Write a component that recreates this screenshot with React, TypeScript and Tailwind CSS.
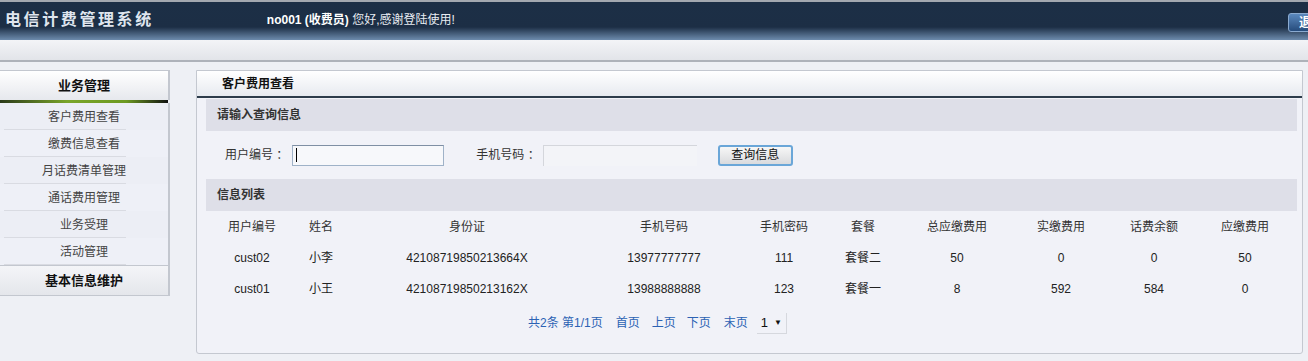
const menuItems = ["客户费用查看", "缴费信息查看", "月话费清单管理", "通话费用管理", "业务受理", "活动管理"];

const columns = [
  { title: "用户编号", width: "w-[92px]" },
  { title: "姓名", width: "w-[46px]" },
  { title: "身份证", width: "w-[246px]" },
  { title: "手机号码", width: "w-[148px]" },
  { title: "手机密码", width: "w-[92px]" },
  { title: "套餐", width: "w-[66px]" },
  { title: "总应缴费用", width: "w-[122px]" },
  { title: "实缴费用", width: "w-[86px]" },
  { title: "话费余额", width: "w-[100px]" },
  { title: "应缴费用", width: "w-[82px]" },
];

const rows = [
  ["cust02", "小李", "42108719850213664X", "13977777777", "111", "套餐二", "50", "0", "0", "50"],
  ["cust01", "小王", "42108719850213162X", "13988888888", "123", "套餐一", "8", "592", "584", "0"],
];

function Sidebar() {
  return (
    <div className="w-[170px] shrink-0">
      <div className="border-r-2 border-t border-[#c3c7cf] bg-[linear-gradient(to_bottom,#ffffff,#e6e8ed)] h-[30px] flex items-center justify-center text-[13px] font-bold text-[#111]">
        业务管理
      </div>
      <div className="h-[3px] bg-[linear-gradient(to_right,#2b3a1a,#7aa52a_40%,#6d9a22_75%,#111)] mr-[2px]" />
      <div className="border-r-2 border-[#c3c7cf] bg-[#eceef5]">
        {menuItems.map((item, i) => (
          <div
            key={item}
            className={`h-[27px] flex items-center justify-center text-[12px] text-[#444] ${i % 2 === 0 ? "" : "bg-[#eef0f7]"}`}
          >
            <div className="relative w-full h-full flex items-center justify-center">
              {item}
              <div className="absolute left-[4px] bottom-0 w-[122px] h-px bg-[#d9dbe2]" />
            </div>
          </div>
        ))}
      </div>
      <div className="border-r-2 border-y border-[#c3c7cf] bg-[linear-gradient(to_bottom,#f4f5f8,#e4e6eb)] h-[31px] flex items-center justify-center text-[13px] font-bold text-[#111]">
        基本信息维护
      </div>
    </div>
  );
}

function QueryForm() {
  return (
    <>
      <div className="h-[32px] bg-[#dedfe8] flex items-center pl-[11px] text-[12px] font-bold text-[#333]">
        请输入查询信息
      </div>
      <div className="h-[48px] flex items-center text-[12px] text-[#333]">
        <span className="ml-[19px] whitespace-pre">用户编号 ：</span>
        <div className="ml-[4px] w-[152px] h-[21px] border border-[#9fb2c8] border-t-[#7f8fa4] bg-[#f7f8fb] flex items-center">
          <div className="ml-[3px] w-px h-[14px] bg-[#000]" />
        </div>
        <span className="ml-[32px] whitespace-pre">手机号码 ：</span>
        <div className="ml-[3px] w-[154px] h-[21px] border-t border-l border-[#d4d6dc] bg-[#f3f4f8]" />
        <button className="ml-[21px] w-[75px] h-[21px] rounded-[3px] border-2 border-[#6aa6d8] bg-[linear-gradient(to_bottom,#f7f7f7,#d9dadd)] text-[12px] text-[#111] flex items-center justify-center">
          查询信息
        </button>
      </div>
    </>
  );
}

function InfoTable() {
  return (
    <>
      <div className="h-[32px] bg-[#dedfe8] flex items-center pl-[11px] text-[12px] font-bold text-[#333]">
        信息列表
      </div>
      <div className="flex h-[31px] items-center text-[12px] text-[#333]">
        {columns.map((c) => (
          <div key={c.title} className={`${c.width} text-center`}>
            {c.title}
          </div>
        ))}
      </div>
      {rows.map((r) => (
        <div key={r[0]} className="flex h-[31px] items-center text-[12px] text-[#222]">
          {r.map((v, i) => (
            <div key={i} className={`${columns[i].width} text-center`}>
              {v}
            </div>
          ))}
        </div>
      ))}
      <div className="h-[38px] flex items-center pl-[322px] text-[12px] text-[#2c62b4]">
        <span>共2条 第1/1页</span>
        <span className="ml-[13px]">首页</span>
        <span className="ml-[12px]">上页</span>
        <span className="ml-[11px]">下页</span>
        <span className="ml-[13px]">末页</span>
        <span className="ml-[9px] h-[21px] px-[4px] border-r border-b border-[#d6d8de] flex items-center gap-[6px] text-[#111] text-[13px]">
          1<span className="text-[8px]">▼</span>
        </span>
      </div>
    </>
  );
}

export default function App() {
  return (
    <div className="w-[1308px] h-[361px] overflow-hidden bg-[#eef0f5] font-['Liberation_Sans','Noto_Sans_CJK_SC',sans-serif]">
      {/* 顶部标题栏 */}
      <div className="h-[40px] bg-[linear-gradient(to_bottom,#a3a8b0_0px,#a3a8b0_2px,#1c2f46_2px,#1c2e45_27px,#6d8bad_40px)] flex items-start">
        <div className="ml-[5px] mt-[9px] text-[16px] font-bold tracking-[2.6px] text-[#dfe5ee] leading-[22px]">
          电信计费管理系统
        </div>
        <div className="ml-[113px] mt-[12px] text-[12px] leading-[16px] text-[#e8ecf2]">
          <span className="font-bold text-white">no001 (收费员)</span> 您好,感谢登陆使用!
        </div>
        <div className="ml-auto mr-[-22px] mt-[13px] w-[42px] h-[19px] rounded-[3px] border border-[#8aaad0] bg-[linear-gradient(to_bottom,#5b88bd,#264c7c)] text-white text-[12px] font-bold flex items-center pl-[10px]">
          退出
        </div>
      </div>
      <div className="h-[20px] bg-[linear-gradient(to_bottom,#f3f4f7,#e2e4e9)]" />
      <div className="h-[2px] bg-[#aeb2ba]" />

      <div className="flex pt-[8px]">
        <Sidebar />
        {/* 主面板 */}
        <div className="ml-[26px] w-[1107px] h-[284px] border border-[#c4c8d0] rounded-b-[3px] bg-[#f1f2f8]">
          <div className="h-[25px] bg-[linear-gradient(to_bottom,#ffffff,#e7eaf0)] flex items-center pl-[25px] text-[12px] font-bold text-[#111]">
            客户费用查看
          </div>
          <div className="h-[2px] bg-[#2d3c4b]" />
          <div className="ml-[9px] mr-[5px] mt-[1px]">
            <QueryForm />
            <InfoTable />
          </div>
        </div>
      </div>
    </div>
  );
}
